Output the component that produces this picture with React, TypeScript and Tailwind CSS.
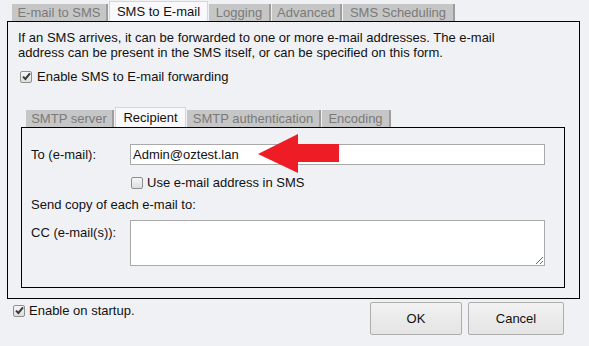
import React from 'react'

const FONT = { fontFamily: '"Liberation Sans", Arial, sans-serif' }

const CheckBox = ({ checked }: { checked?: boolean }) => (
  <span className="flex h-[12px] w-[12px] shrink-0 items-center justify-center rounded-[2px] border border-[#8e8f8f] bg-gradient-to-b from-[#f6f6f6] to-[#dedede]">
    {checked && (
      <svg width="9" height="9" viewBox="0 0 9 9">
        <path d="M1 4.6 L3.4 7 L8 1.4" fill="none" stroke="#3a3a3a" strokeWidth="2" />
      </svg>
    )}
  </span>
)

const Tab = ({ label, active, w }: { label: string; active?: boolean; w: string }) =>
  active ? (
    <div className={`${w} flex h-[20px] items-center justify-center border-x border-t border-[#d6d6d6] bg-[#f9f9fb] text-[#111]`}>
      {label}
    </div>
  ) : (
    <div className={`${w} flex h-[17px] items-center justify-center border-r-2 border-[#9d9d9d] bg-[#c6c6c6] text-[#7a7a7a]`}>
      {label}
    </div>
  )

export default function App() {
  return (
    <div
      style={FONT}
      className="relative flex h-[346px] w-[589px] flex-col overflow-hidden bg-[#f0f1f5] text-[13px] leading-[15px] text-[#111]"
    >
      {/* top tabs */}
      <div className="flex h-[21px] items-end gap-[1px] pl-[12px]">
        <Tab label="E-mail to SMS" w="w-[96px]" />
        <Tab label="SMS to E-mail" active w="w-[99px]" />
        <Tab label="Logging" w="w-[62px]" />
        <Tab label="Advanced" w="w-[70px]" />
        <Tab label="SMS Scheduling" w="w-[112px]" />
      </div>

      {/* outer panel */}
      <div className="ml-[7px] flex h-[278px] w-[573px] flex-col border border-black pl-[10px] pt-[8px]">
        <p className="w-[490px]">
          If an SMS arrives, it can be forwarded to one or more e-mail addresses. The e-mail
          address can be present in the SMS itself, or can be specified on this form.
        </p>
        <label className="mt-[9px] flex items-center gap-[5px] pl-[2px]">
          <CheckBox checked />
          <span>Enable SMS to E-mail forwarding</span>
        </label>

        {/* inner tabs */}
        <div className="mt-[23px] flex h-[20px] items-end gap-[1px] pl-[8px]">
          <Tab label="SMTP server" w="w-[88px]" />
          <Tab label="Recipient" active w="w-[71px]" />
          <Tab label="SMTP authentication" w="w-[134px]" />
          <Tab label="Encoding" w="w-[69px]" />
        </div>

        {/* inner panel */}
        <div className="ml-[3px] flex h-[161px] w-[544px] flex-col border border-black pl-[9px] pt-[16px]">
          <div className="flex items-center">
            <span className="w-[99px]">To (e-mail):</span>
            <div className="flex h-[21px] w-[415px] items-center border border-[#a9a9a9] bg-white pl-[2px]">
              Admin@oztest.lan
            </div>
          </div>
          <label className="ml-[100px] mt-[10px] flex items-center gap-[4px]">
            <CheckBox />
            <span>Use e-mail address in SMS</span>
          </label>
          <div className="mt-[7px]">Send copy of each e-mail to:</div>
          <div className="mt-[8px] flex items-start">
            <span className="w-[99px] pt-[5px]">CC (e-mail(s)):</span>
            <textarea
              readOnly
              className="h-[46px] w-[415px] border border-[#a9a9a9] bg-white outline-none"
            />
          </div>
        </div>
      </div>

      {/* bottom */}
      <div className="flex items-start">
        <label className="ml-[13px] mt-[4px] flex items-center gap-[4px]">
          <CheckBox checked />
          <span>Enable on startup.</span>
        </label>
        <div className="ml-auto mr-[25px] mt-[3px] flex gap-[6px]">
          <button className="h-[33px] w-[92px] rounded-[2px] border border-[#adadad] bg-gradient-to-b from-[#f2f2f2] to-[#e4e4e4] text-[#111]">
            OK
          </button>
          <button className="h-[33px] w-[96px] rounded-[2px] border border-[#adadad] bg-gradient-to-b from-[#f2f2f2] to-[#e4e4e4] text-[#111]">
            Cancel
          </button>
        </div>
      </div>

      {/* red arrow annotation */}
      <svg className="absolute left-[256px] top-[133px]" width="86" height="42" viewBox="0 0 86 42">
        <polygon points="2,21 42,1 42,11 83,11 83,29 42,29 42,40" fill="#ee1c25" />
      </svg>
    </div>
  )
}
